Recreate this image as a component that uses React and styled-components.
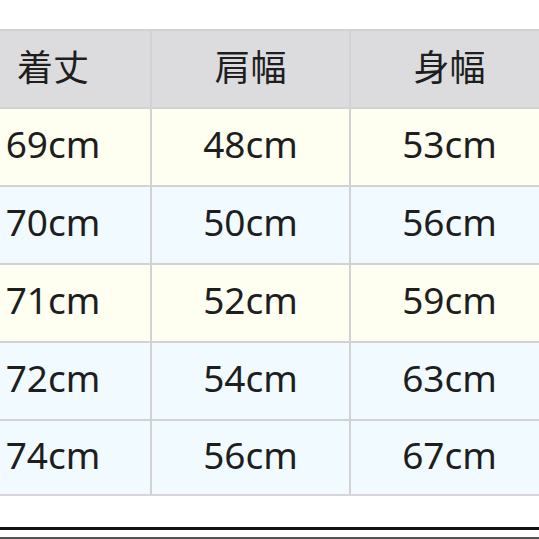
import React from "react";
import styled, { createGlobalStyle } from "styled-components";

const Global = createGlobalStyle`
  html, body { margin: 0; padding: 0; background: #ffffff; }
  body { font-family: "Noto Sans", "Noto Sans CJK JP", sans-serif; }
`;

const Page = styled.div`
  width: 539px;
  height: 539px;
  overflow: hidden;
  background: #ffffff;
  display: flex;
  flex-direction: column;
`;

const TopSpace = styled.div`
  height: 29px;
  flex: none;
`;

const Table = styled.div`
  display: grid;
  grid-template-columns: 194px 197px 197px;
  grid-template-rows: repeat(5, 76px) 73px;
  gap: 2px;
  background: #d2d2d4;
  border-top: 2px solid #d2d2d4;
  border-bottom: 2px solid #d6d6d8;
  margin-left: -44px;
  width: 600px;
  flex: none;
`;

const Cell = styled.div`
  display: flex;
  align-items: center;
  justify-content: center;
  font-size: 37px;
  color: #1e1e1e;
  background: ${(p) => p.$bg};
  padding-bottom: 7px;
  box-sizing: border-box;
`;

const HeadCell = styled(Cell)`
  font-family: "Noto Sans CJK JP", sans-serif;
  font-size: 36px;
  background: #dcdcde;
  padding-bottom: 8px;
`;

const Gap = styled.div`
  flex: 1;
`;

const Rule = styled.div`
  height: 3px;
  background: #111111;
  flex: none;
`;

const Space = styled.div`
  height: 7px;
  flex: none;
`;

const ThinRule = styled.div`
  height: 2px;
  background: #555555;
  flex: none;
`;

const YELLOW = "#fffff1";
const BLUE = "#f1fbff";

const headers = ["着丈", "肩幅", "身幅"];
const rows = [
  { bg: YELLOW, v: ["69cm", "48cm", "53cm"] },
  { bg: BLUE, v: ["70cm", "50cm", "56cm"] },
  { bg: YELLOW, v: ["71cm", "52cm", "59cm"] },
  { bg: BLUE, v: ["72cm", "54cm", "63cm"] },
  { bg: BLUE, v: ["74cm", "56cm", "67cm"] },
];

export default function App() {
  return (
    <Page>
      <Global />
      <TopSpace />
      <Table>
        {headers.map((h) => (
          <HeadCell key={h}>{h}</HeadCell>
        ))}
        {rows.map((r, i) =>
          r.v.map((v, j) => (
            <Cell key={`${i}-${j}`} $bg={r.bg}>
              {v}
            </Cell>
          ))
        )}
      </Table>
      <Gap />
      <Rule />
      <Space />
      <ThinRule />
    </Page>
  );
}
